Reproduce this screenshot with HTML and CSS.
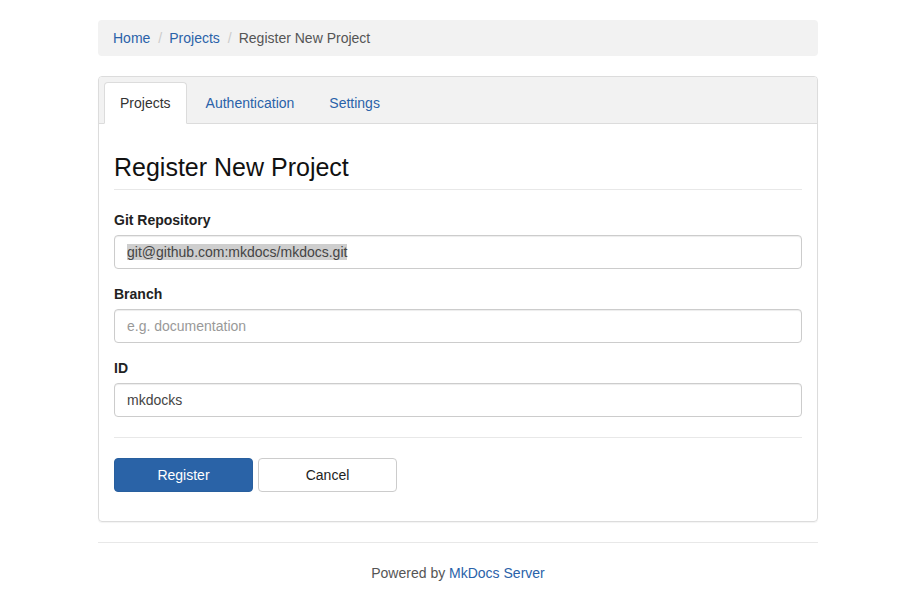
FILE: index.html
```html
<!DOCTYPE html>
<html lang="en">
<head>
<meta charset="utf-8">
<title>Register New Project</title>
<link rel="stylesheet" href="styles.css">
</head>
<body>
<div class="container">
  <ol class="breadcrumb">
    <li><a href="#">Home</a></li>
    <li><a href="#">Projects</a></li>
    <li class="active">Register New Project</li>
  </ol>

  <div class="panel">
    <div class="panel-heading">
      <ul class="nav-tabs">
        <li class="active"><a href="#">Projects</a></li>
        <li><a href="#">Authentication</a></li>
        <li><a href="#">Settings</a></li>
      </ul>
    </div>
    <div class="panel-body">
      <h3 class="page-header">Register New Project</h3>
      <form>
        <div class="form-group">
          <label class="label">Git Repository</label>
          <div class="form-control"><span class="sel">git@github.com:mkdocs/mkdocs.git</span></div>
        </div>
        <div class="form-group">
          <label class="label">Branch</label>
          <div class="form-control placeholder">e.g. documentation</div>
        </div>
        <div class="form-group">
          <label class="label">ID</label>
          <div class="form-control">mkdocks</div>
        </div>
        <hr class="divider">
        <div class="actions">
          <button type="button" class="btn btn-primary">Register</button>
          <button type="button" class="btn btn-default">Cancel</button>
        </div>
      </form>
    </div>
  </div>

  <footer class="footer">
    Powered by <a href="#">MkDocs Server</a>
  </footer>
</div>
</body>
</html>
```

FILE: styles.css
```css
* { box-sizing: border-box; }
html, body {
  margin: 0;
  padding: 0;
  background: #fff;
}
body {
  font-family: "Liberation Sans", Arial, Helvetica, sans-serif;
  font-size: 14px;
  line-height: 20px;
  color: #333;
}
a { color: #2a62a9; text-decoration: none; }

.container {
  width: 720px;
  margin: 0 auto;
  padding-top: 20px;
}

.breadcrumb {
  list-style: none;
  margin: 0 0 20px;
  padding: 8px 15px;
  background: #f2f2f2;
  border-radius: 4px;
  display: flex;
  height: 36px;
}
.breadcrumb li + li::before {
  content: "/";
  color: #ccc;
  padding: 0 7px 0 8px;
}
.breadcrumb .active { color: #555; }

.panel {
  border: 1px solid #dcdcdc;
  border-radius: 4px;
  margin-bottom: 20px;
  box-shadow: 0 1px 1px rgba(0,0,0,0.05);
}
.panel-heading {
  background: #f2f2f2;
  border-bottom: 1px solid #dcdcdc;
  border-radius: 3px 3px 0 0;
  padding: 5px 5px 0;
}
.nav-tabs {
  list-style: none;
  margin: 0 0 -1px;
  padding: 0;
  display: flex;
}
.nav-tabs li a {
  display: block;
  padding: 10px 15px;
  margin-right: 2px;
  border: 1px solid transparent;
  border-radius: 4px 4px 0 0;
  line-height: 20px;
}
.nav-tabs li + li a { padding: 10px 16px 10px 16px; }
.nav-tabs li:nth-child(2) a { margin-right: 1px; }
.nav-tabs li.active a {
  background: #fff;
  color: #333;
  border-color: #dcdcdc;
  border-bottom-color: #fff;
}

.panel-body {
  padding: 30px 15px 14px;
}
.page-header {
  margin: 0 0 20px;
  padding-bottom: 9px;
  border-bottom: 1px solid #e8e8e8;
  font-size: 25px;
  line-height: 26px;
  font-weight: 500;
  color: #111;
}
form { margin: 0; }
.form-group { margin-bottom: 15px; }
.label {
  display: block;
  font-weight: bold;
  color: #222;
  margin-bottom: 5px;
}
.form-control {
  height: 34px;
  padding: 6px 12px;
  border: 1px solid #ccc;
  border-radius: 4px;
  color: #444;
  line-height: 20px;
  box-shadow: inset 0 1px 1px rgba(0,0,0,0.075);
}
.form-control.placeholder { color: #999; }
.sel { background: #cecece; }

.divider {
  border: 0;
  border-top: 1px solid #e8e8e8;
  margin: 20px 0;
}
.actions {
  display: flex;
  gap: 5px;
  margin-bottom: 15px;
}
.btn {
  width: 139px;
  height: 34px;
  font-family: inherit;
  font-size: 14px;
  line-height: 20px;
  border-radius: 4px;
  border: 1px solid #ccc;
  background: #fff;
  color: #222;
  padding: 6px 12px;
}
.btn-primary {
  background: #2a63a7;
  border-color: #285f9e;
  color: #fff;
}

.footer {
  border-top: 1px solid #e8e8e8;
  padding: 20px 0;
  text-align: center;
  color: #555;
}
```
